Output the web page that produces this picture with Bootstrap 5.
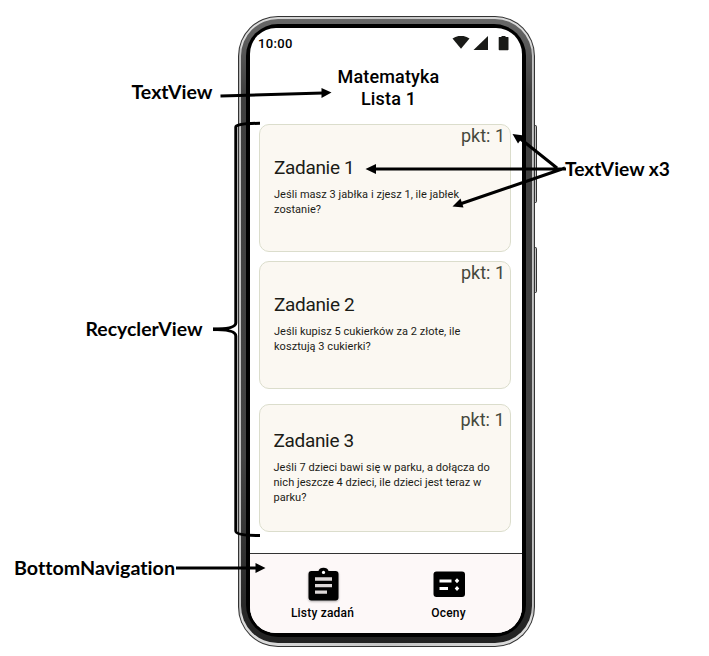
<!DOCTYPE html>
<html lang="pl">
<head>
<meta charset="utf-8">
<meta name="viewport" content="width=device-width, initial-scale=1">
<title>Matematyka – Lista 1</title>
<link href="https://cdn.jsdelivr.net/npm/bootstrap@5.3.0/dist/css/bootstrap.min.css" rel="stylesheet">
<style>
body{background:#fff;font-family:Roboto,sans-serif;color:#000}
.stage{width:709px;height:656px;padding:16px 0 0 238px}
.side-keys{position:absolute;width:6px;left:531px;border:1px solid #333;border-left:0;border-radius:0 2px 2px 0;background:linear-gradient(90deg,#888,#ddd 50%,#bbb)}
.key-volume{top:125px;height:78px}
.key-power{top:247px;height:46px}
.shell{width:297px;height:631px;border-radius:40px;padding:1px;background:#333}
.shell-rim{border-radius:39px;padding:2px 2px 3px;background:linear-gradient(90deg,#aaa,#ddd 1%,#c4c4c4 50%,#ddd 99%,#aaa)}
.shell-metal{border-radius:37px;padding:5px 6px 6px 5px;background:linear-gradient(180deg,#686868,#404040 12%,#444 70%,#222)}
.bezel{border-radius:32px;padding:4px;background:#000}
.screen{border-radius:26px;background:#fff;overflow:hidden}
.status{height:36px;padding:8px 13px 0 8px}
.clock{font-size:13px;line-height:16px;font-weight:500;letter-spacing:.35px}
.page-title{font-size:18px;line-height:21.5px;font-weight:500;letter-spacing:.15px;padding-left:5px;height:60px;padding-top:2px}
.task{width:252px;height:128px;margin-left:9px;background:#fbf8f2;border:1px solid #dbddcc;border-radius:10px;padding:0 5px 0 14px;color:#1b1c17;flex:none}
.pts{font-size:18px;line-height:22px;color:#45483d;text-align:right}
.task-name{font-size:19px;line-height:24px;font-weight:400;letter-spacing:-.33px;margin:9px 0 7px}
.task-body{font-size:11px;line-height:15px;letter-spacing:.04px;white-space:nowrap;margin:0}
.task-second{margin-top:9px}
.task-third{margin-top:15px;margin-left:8.5px}
.task-third .pts{padding-top:4px}
.task-third .task-name{margin-top:-2px}
.bottom-bar{height:80px;background:#fdf8f8;border-top:1px solid #333}
.bar-item{font-size:12px;line-height:16px;font-weight:500;letter-spacing:.2px;padding-top:12px}
.bar-item svg{display:block}
.bar-item span{margin-top:2px}
.bar-lists{width:145px}
.bar-lists svg{filter:drop-shadow(0 1px 1px #0005)}
.bar-grades{width:107px}
.notes{position:absolute;left:0;top:0;pointer-events:none}
.notes text{font-family:Lato,sans-serif;font-weight:700;font-size:18.6px;font-variant-ligatures:none}
</style>
<script src="https://cdn.jsdelivr.net/npm/bootstrap@5.3.0/dist/js/bootstrap.bundle.min.js"></script>
</head>
<body>
<main class="stage position-relative overflow-hidden">
  <div class="side-keys key-volume"></div>
  <div class="side-keys key-power"></div>
  <div class="shell position-relative d-flex">
    <div class="shell-rim d-flex w-100">
      <div class="shell-metal d-flex w-100">
        <div class="bezel d-flex w-100">
          <div class="screen d-flex flex-column w-100">
            <div class="status d-flex justify-content-between">
              <span class="clock">10:00</span>
              <svg width="57" height="16" viewBox="452 36 57 16" fill="#191a17"><path d="M452.5 38.5Q461 33 469.5 38.5L461 48.7Z"/><path d="M473.5 50H488V36Z"/><path d="M499 37h2.500v-1.600h4V37h2.500q.5 0 .5.700v11.800q0 .7-.7.700h-8.400q-.7 0-.7-.7V37.700q0-.7.300-.7Z"/></svg>
            </div>
            <h1 class="page-title text-center mb-0">Matematyka<br>Lista 1</h1>
            <section class="d-flex flex-column flex-grow-1">
              <article class="task">
                <div class="pts">pkt: 1</div>
                <h2 class="task-name">Zadanie 1</h2>
                <p class="task-body">Jeśli masz 3 jabłka i zjesz 1, ile jabłek<br>zostanie?</p>
              </article>
              <article class="task task-second">
                <div class="pts">pkt: 1</div>
                <h2 class="task-name">Zadanie 2</h2>
                <p class="task-body">Jeśli kupisz 5 cukierków za 2 złote, ile<br>kosztują 3 cukierki?</p>
              </article>
              <article class="task task-third">
                <div class="pts">pkt: 1</div>
                <h2 class="task-name">Zadanie 3</h2>
                <p class="task-body">Jeśli 7 dzieci bawi się w parku, a dołącza do<br>nich jeszcze 4 dzieci, ile dzieci jest teraz w<br>parku?</p>
              </article>
            </section>
            <nav class="bottom-bar d-flex">
              <div class="bar-item bar-lists d-flex flex-column align-items-center">
                <svg width="34" height="37" viewBox="305 566 34 37"><path d="M310.500 571H317.500Q318.500 567.800 322.500 567.800T327.500 571H334.500Q337.500 571 337.500 574V597.500Q337.500 600.500 334.500 600.500H310.500Q307.500 600.500 307.500 597.500V574Q307.500 571 310.500 571Z"/><circle cx="322.500" cy="572.400" r="1.600" fill="#fff"/><path d="M314 577.300h17v3.500h-17zm0 6.600h17v3.300h-17zm0 6.600h12v3.200h-12z" fill="#ddd8d8"/></svg>
                <span>Listy zadań</span>
              </div>
              <div class="bar-item bar-grades d-flex flex-column align-items-center">
                <svg width="34" height="37" viewBox="433 566 34 37"><rect x="434.500" y="571.500" width="31.500" height="25.500" rx="3"/><path d="M440.500 579.500h12v3h-12zm0 7.500h8.500v3h-8.500zM458 578.300l2.300 2.500-2.300 2.500-2.300-2.500zm0 7.700 2.300 2.500-2.300 2.500-2.300-2.500z" fill="#fff"/></svg>
                <span>Oceny</span>
              </div>
            </nav>
          </div>
        </div>
      </div>
    </div>
  </div>
  <svg class="notes" width="709" height="656" viewBox="0 0 709 656">
    <g fill="none" stroke="#000" stroke-width="3">
      <path d="M220.500 96 323 93M176 568H257M557 168 520 138.500M566 169H374M565 168 460 204"/>
      <path d="M260 123.300Q235.800 123.500 235.800 127V323Q235.800 329 213 329.300Q235.800 329.500 235.800 336V531Q235.800 535.500 260 535.500"/>
      <path d="M213 329.300H229" stroke-width="3.500"/>
    </g>
    <path d="M331.500 92.600 321.500 88V98ZM265.500 568 255.500 563V573ZM512.500 134 524 135.500 518 143.500ZM365.500 169 376 164V174ZM452.500 206.500 460.500 198.500 463.500 207.500Z"/>
    <text x="131.500" y="98.800" textLength="81" lengthAdjust="spacingAndGlyphs">TextView</text>
    <text x="565" y="176" textLength="105" lengthAdjust="spacingAndGlyphs">TextView x3</text>
    <text x="85.500" y="336" textLength="117" lengthAdjust="spacingAndGlyphs">RecyclerView</text>
    <text x="14" y="575" textLength="161" lengthAdjust="spacingAndGlyphs">BottomNavigation</text>
  </svg>
</main>
</body>
</html>
